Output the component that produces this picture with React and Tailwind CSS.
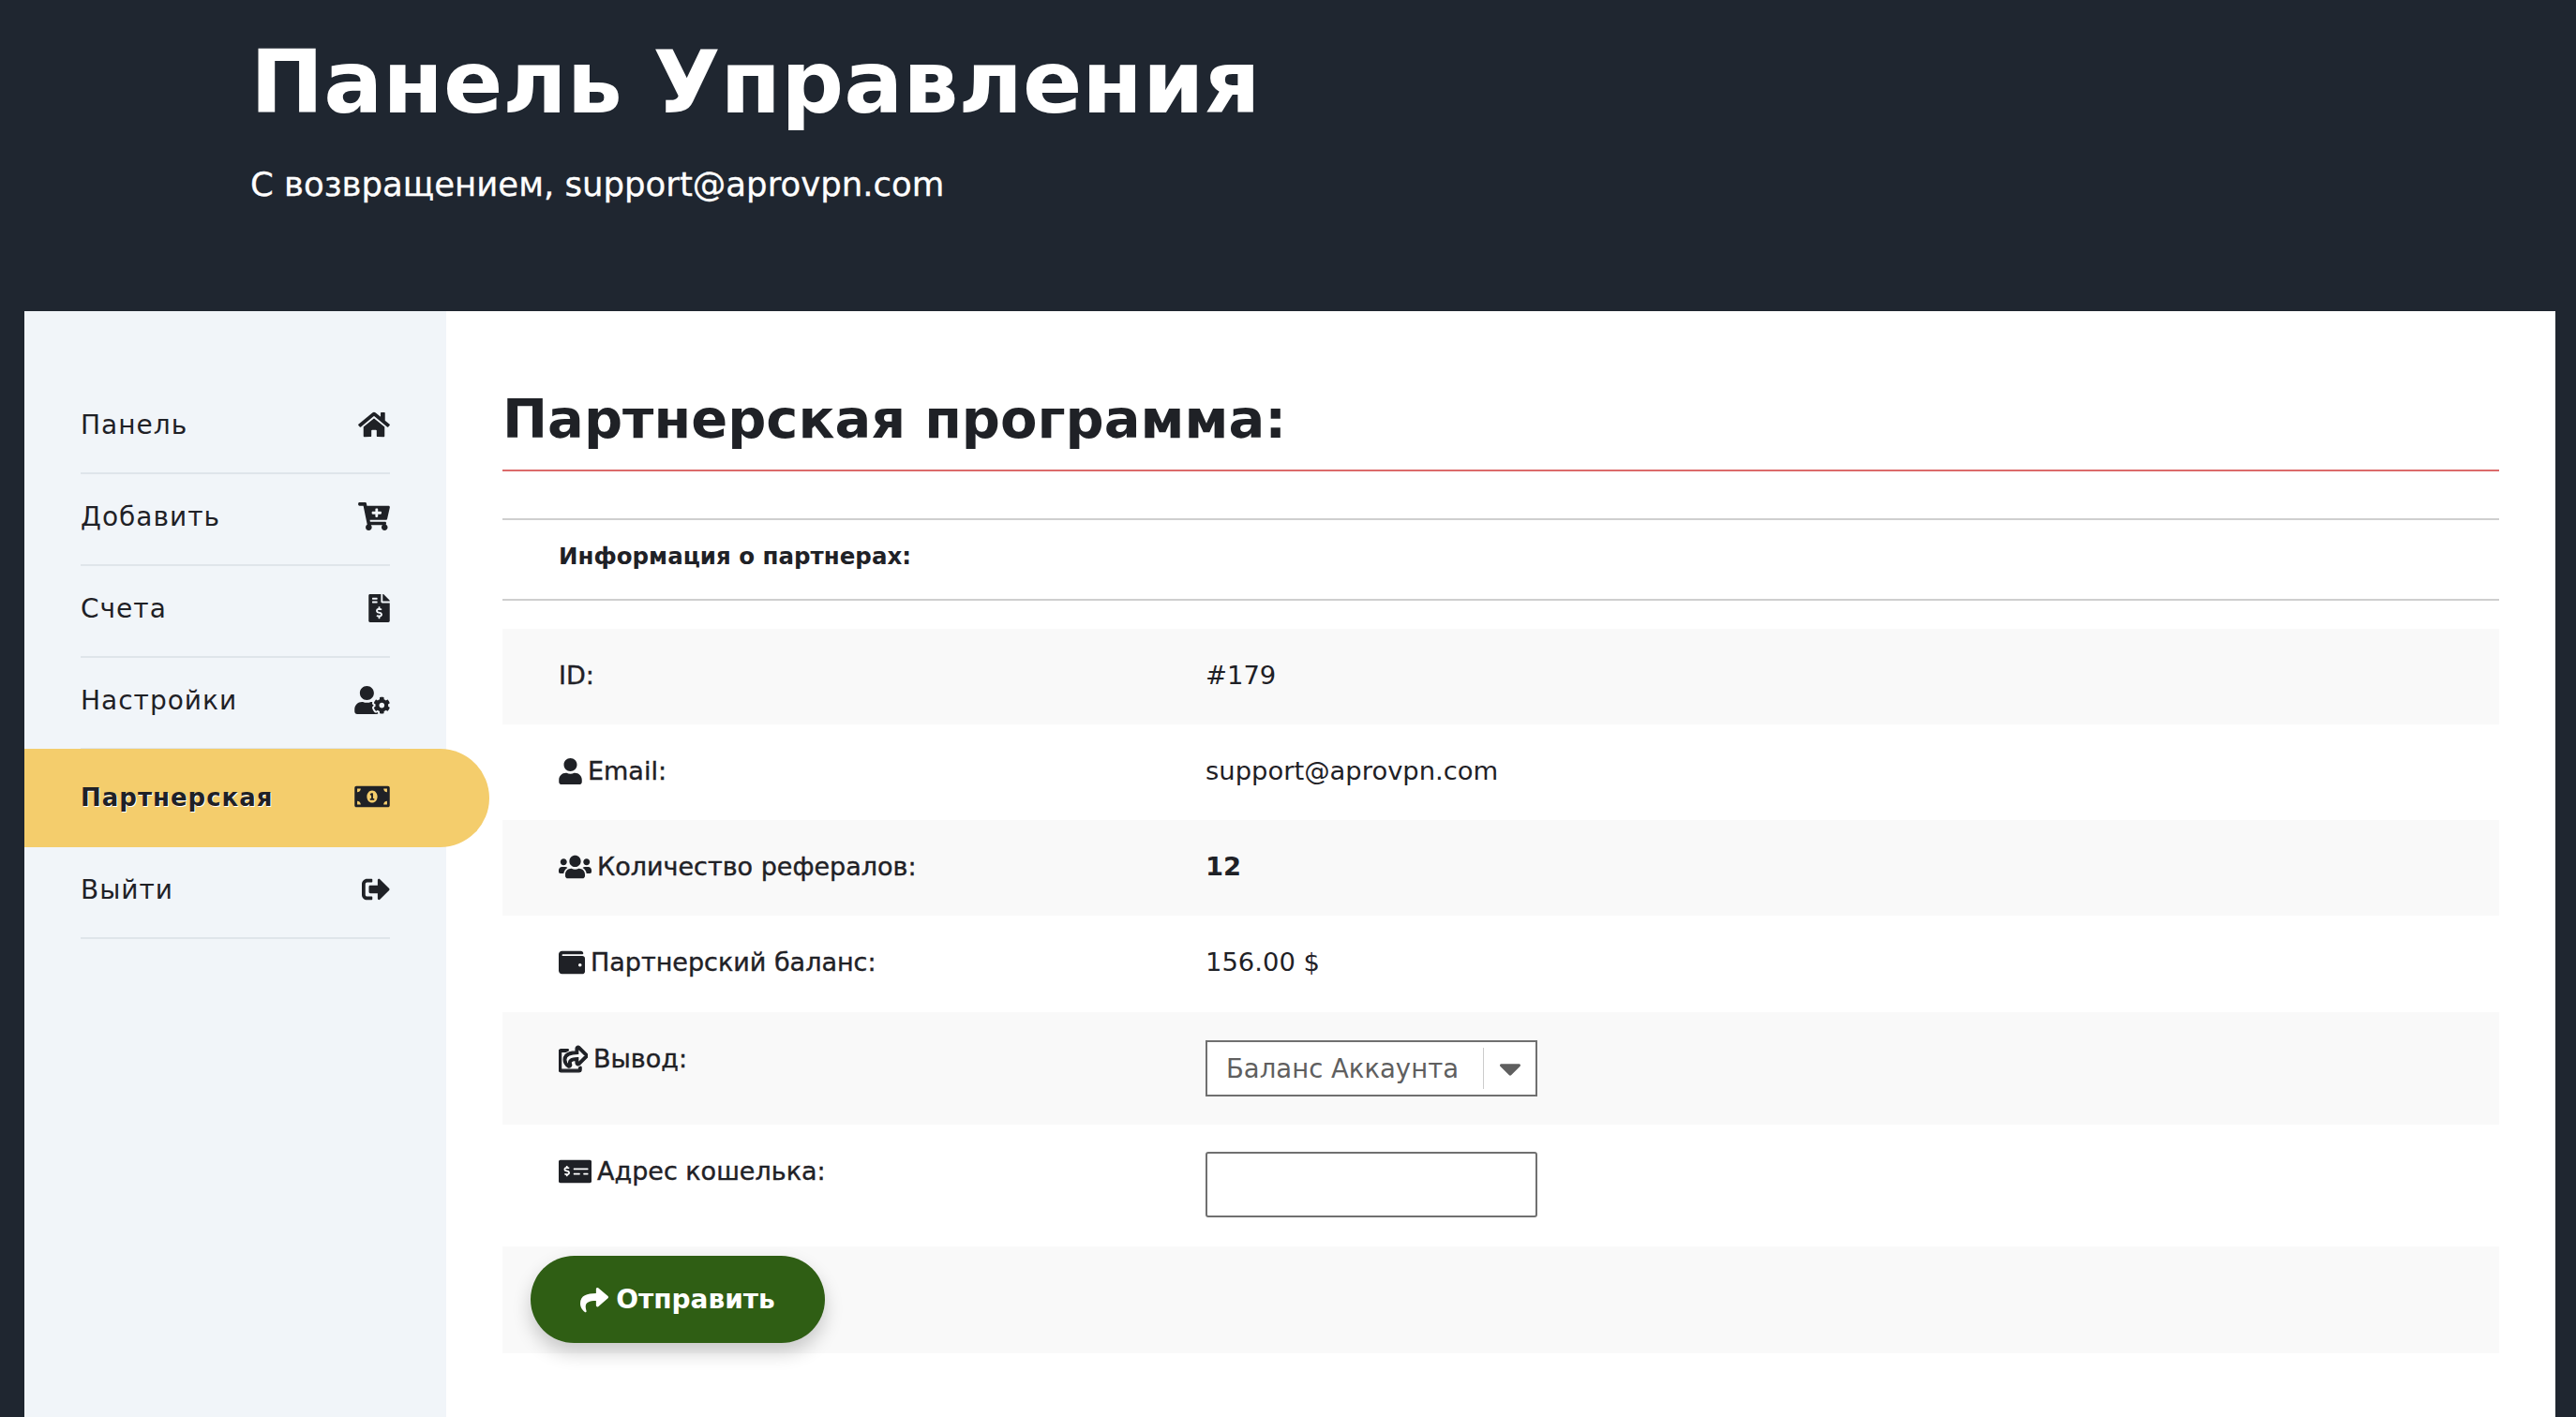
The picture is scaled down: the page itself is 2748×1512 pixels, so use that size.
import {
    FaHome,
    FaCartPlus,
    FaFileInvoiceDollar,
    FaUserCog,
    FaMoneyBillAlt,
    FaSignOutAlt,
    FaUser,
    FaUsers,
    FaWallet,
    FaRegShareSquare,
    FaMoneyCheckAlt,
    FaShare,
    FaCaretDown,
} from 'react-icons/fa'

const menu = [
    { label: 'Панель', icon: FaHome, size: 'h-[30px] w-[34px]' },
    { label: 'Добавить', icon: FaCartPlus, size: 'h-[30px] w-[34px]' },
    { label: 'Счета', icon: FaFileInvoiceDollar, size: 'h-[30px] w-[23px]' },
    { label: 'Настройки', icon: FaUserCog, size: 'h-[30px] w-[38px]' },
    { label: 'Партнерская', icon: FaMoneyBillAlt, size: 'h-[30px] w-[38px]', active: true },
    { label: 'Выйти', icon: FaSignOutAlt, size: 'h-[30px] w-[30px]' },
]

const Sidebar = () => (
    <aside className="w-[450px] shrink-0 bg-[#f1f5f9] px-[60px] pt-[76px]">
        {menu.map(item =>
            item.active ? (
                <div
                    key={item.label}
                    className="relative -mx-[60px] -mt-px flex h-[105px] w-[496px] items-center justify-between rounded-r-[53px] bg-[#f4cd6c] pl-[60px] pr-[106px]">
                    <span className="text-[26px] font-bold tracking-[1px] [text-shadow:1px_1px_0_#fff]">
                        {item.label}
                    </span>
                    <item.icon className={`${item.size} mb-[3px]`} />
                </div>
            ) : (
                <div
                    key={item.label}
                    className="flex h-[98px] items-center justify-between border-b-2 border-[#dfe5ea] text-[28px] tracking-[1px]">
                    <span className="mb-[5px]">{item.label}</span>
                    <item.icon className={`${item.size} mb-[6px]`} />
                </div>
            ),
        )}
    </aside>
)

const Row = ({ icon: Icon, iconSize, label, striped, className, children }) => (
    <div
        className={`grid grid-cols-[750px_1fr] pl-[60px] ${striped ? 'bg-[#f9f9f9]' : ''} ${className}`}>
        <div className="flex items-center gap-[6px] self-start pt-[30px] text-[27px] leading-[40px] [-webkit-text-stroke:0.4px_#1f2126]">
            {Icon && <Icon className={`${iconSize} shrink-0`} />}
            <span>{label}</span>
        </div>
        <div className="-ml-[60px] pt-[29px] text-[27.4px] leading-[41px]">{children}</div>
    </div>
)

const App = () => (
    <div className="flex h-screen flex-col overflow-hidden bg-[#1f2630] font-['DejaVu_Sans',sans-serif] text-[#1f2126]">
        <header className="h-[332px] shrink-0 pl-[267px] pt-[25px] text-white">
            <h1 className="text-[93.5px] leading-[125px] font-bold">Панель Управления</h1>
            <p className="mt-[23px] text-[35.5px] leading-[48px] [-webkit-text-stroke:0.3px_#fff]">
                С возвращением, support@aprovpn.com
            </p>
        </header>

        <div className="mx-[26px] mr-[22px] flex min-h-0 flex-1 bg-white">
            <Sidebar />
            <main className="flex-1 pl-[60px] pr-[60px]">
                <h2 className="border-b-2 border-[#dc6b6b] pt-[74px] pb-[11px] text-[57.5px] leading-[84px] font-bold">
                    Партнерская программа:
                </h2>
                <div className="mt-[50px] flex h-[88px] items-center border-y-2 border-[#cfcfcf] pb-[6px] pl-[60px] text-[24.5px] font-bold">
                    Информация о партнерах:
                </div>

                <div className="mt-[30px]">
                    <Row striped label="ID:" className="h-[102px]">
                        #179
                    </Row>
                    <Row icon={FaUser} iconSize="h-[28px] w-[25px]" label="Email:" className="h-[102px]">
                        support@aprovpn.com
                    </Row>
                    <Row
                        icon={FaUsers}
                        iconSize="h-[28px] w-[35px]"
                        striped
                        label="Количество рефералов:"
                        className="h-[102px]">
                        <b>12</b>
                    </Row>
                    <Row
                        icon={FaWallet}
                        iconSize="h-[28px] w-[28px]"
                        label="Партнерский баланс:"
                        className="h-[103px]">
                        156.00 $
                    </Row>
                    <Row
                        icon={FaRegShareSquare}
                        iconSize="h-[30px] w-[31px] stroke-[24]"
                        striped
                        label="Вывод:"
                        className="h-[120px]">
                        <div className="mt-[1px] flex h-[60px] w-[354px] items-center border-2 border-[#707070] bg-white pl-[20px] text-[27.5px] text-[#5f5f5f]">
                            <span className="flex-1 whitespace-nowrap">Баланс Аккаунта</span>
                            <span className="flex h-[44px] w-[56px] items-center justify-center border-l border-[#cccccc]">
                                <FaCaretDown className="h-[38px] w-[30px] text-[#5f5f5f]" />
                            </span>
                        </div>
                    </Row>
                    <Row
                        icon={FaMoneyCheckAlt}
                        iconSize="h-[28px] w-[35px]"
                        label="Адрес кошелька:"
                        className="h-[130px]">
                        <input
                            type="text"
                            className="h-[70px] w-[354px] rounded-[3px] border-2 border-[#707070] bg-white"
                        />
                    </Row>
                    <div className="h-[114px] bg-[#f9f9f9] pl-[30px] pt-[10px]">
                        <button className="flex h-[93px] w-[314px] items-center justify-center gap-[8px] rounded-[47px] bg-[#2f5e14] text-[28px] font-bold text-white shadow-[0_10px_20px_rgba(0,0,0,0.2)]">
                            <FaShare className="h-[30px] w-[30px]" />
                            Отправить
                        </button>
                    </div>
                </div>
            </main>
        </div>
    </div>
)

export default App
